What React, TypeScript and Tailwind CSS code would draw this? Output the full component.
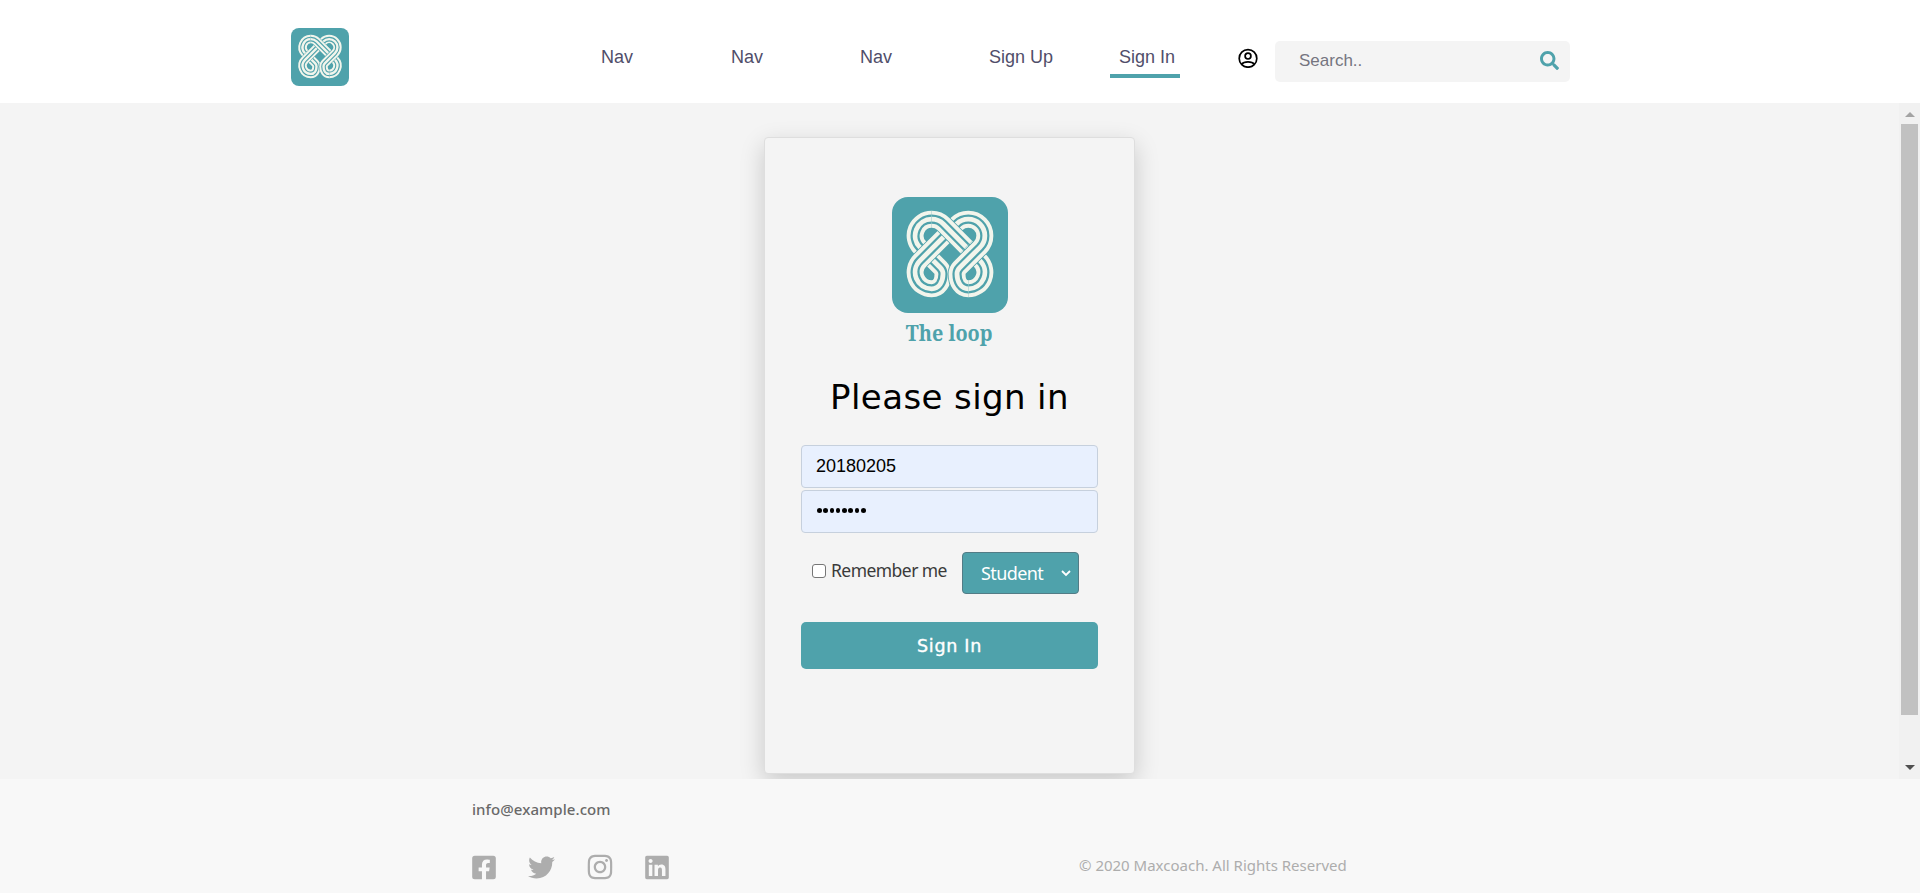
import { FaSearch, FaFacebookSquare, FaTwitter, FaInstagram, FaLinkedin } from "react-icons/fa";

function Strand({ d }: { d: string }) {
  return (
    <g fill="none">
      <path d={d} stroke="#4fa2ab" strokeWidth="18.6" />
      <path d={d} stroke="#f2f5ec" strokeWidth="17" />
      <path d={d} stroke="#4fa2ab" strokeWidth="9.2" />
      <path d={d} stroke="#f2f5ec" strokeWidth="4.8" />
    </g>
  );
}

function LoopMark({ className }: { className: string }) {
  return (
    <svg viewBox="-58 -57 116 116" className={className}>
      <rect x="-58" y="-57" width="116" height="116" rx="16" fill="#4fa2ab" />
      <Strand d="M-18 -34.8H-18.3A16.5 16.5 0 0 0 -30 -6.6L-9.6 13.7A9 9 0 0 1 -7 20C-7 28 -11 34.8 -18.3 34.8H-18.6" />
      <Strand d="M6.6 -16.6L30 6.6A16.5 16.5 0 0 1 18.3 34.8H18" />
      <Strand d="M-18 34.8H-18.3A16.5 16.5 0 0 1 -30 6.6L6.6 -30A16.5 16.5 0 0 1 30 -6.6L9.6 13.7A9 9 0 0 0 7 20C7 28 11 34.8 18.3 34.8H18.6" />
      <Strand d="M-18.6 -34.8H-18.3A16.5 16.5 0 0 1 -6.6 -30L16 -7.3" />
    </svg>
  );
}

function UserCircle({ className }: { className: string }) {
  return (
    <svg viewBox="0 0 20 20" className={className} fill="none" stroke="black" strokeWidth="1.7">
      <circle cx="10" cy="10.4" r="8.8" />
      <circle cx="10" cy="8.1" r="2.9" />
      <path d="M3.6 16.2C5.2 14.2 6.5 13.9 10 13.9C13.5 13.9 14.8 14.2 16.4 16.2" />
    </svg>
  );
}

export default function App() {
  return (
    <div className="flex h-[893px] w-full flex-col overflow-hidden bg-[#f4f4f4] font-['Liberation_Sans',sans-serif]">
      <header className="flex h-[103px] shrink-0 bg-white pl-[291px]">
        <LoopMark className="mt-7 h-[58px] w-[58px]" />
        <nav className="ml-[252px] flex pt-[43px] text-[18px] leading-7 text-[#504e6a]">
          <a className="w-[130px]">Nav</a>
          <a className="w-[129px]">Nav</a>
          <a className="w-[129px]">Nav</a>
          <a className="w-[121px]">Sign Up</a>
          <a className="h-[35px] w-[70px] border-b-4 border-[#4fa2ab] pl-[9px]">Sign In</a>
        </nav>
        <UserCircle className="mt-12 ml-[58px] h-5 w-5" />
        <div className="mt-[41px] ml-[17px] flex h-[41px] w-[295px] items-center justify-between rounded-[5px] bg-[#f4f4f4] pr-[11px] pl-6">
          <span className="pb-px text-[17px] text-[#757580]">Search..</span>
          <FaSearch className="mb-[3px] h-[19px] w-[19px] text-[#4fa2ab]" />
        </div>
      </header>
      <main className="flex h-[676px] shrink-0 overflow-hidden">
        <div className="flex flex-1 justify-center overflow-hidden pt-[34px]">
          <section className="flex h-[637px] w-[371px] flex-col items-center rounded border border-[#dedede] bg-[#f4f4f4] pt-[59px] shadow-[0_8px_24px_rgba(0,0,0,0.18)]">
            <LoopMark className="h-[116px] w-[116px] shrink-0" />
            <span className="mt-[3px] h-8 scale-x-[0.9] font-['Noto_Serif','DejaVu_Serif',serif] text-[22px] leading-8 font-bold text-[#4fa2ab]">The loop</span>
            <h1 className="mt-[25px] h-12 font-['DejaVu_Sans',sans-serif] text-[34px] leading-[48px] tracking-[0.4px] whitespace-nowrap text-black">Please sign in</h1>
            <div className="mt-[24px] flex h-[43px] w-[297px] items-center rounded border border-[#c6d0dd] bg-[#e8f0fe] px-3.5 text-[18px] text-black">20180205</div>
            <div className="mt-0.5 flex h-[43px] w-[297px] items-center gap-[1.8px] rounded border border-[#c6d0dd] bg-[#e8f0fe] px-[15px]">
              {Array.from({ length: 8 }, (_, i) => (
                <span key={i} className="mb-[2px] h-[4.5px] w-[4.5px] rounded-full bg-black" />
              ))}
            </div>
            <div className="mt-[19px] flex h-[42px] w-[297px] pl-[11px] font-['Noto_Sans',sans-serif]">
              <span className="mt-3 h-3.5 w-3.5 shrink-0 rounded-[3px] border border-[#767676] bg-white" />
              <span className="ml-[5px] w-[131px] text-[17.5px] leading-[37px] tracking-[-0.55px] whitespace-nowrap text-[#3a3a3a]">Remember me</span>
              <div className="flex w-[117px] items-center justify-between rounded border border-[#527c86] bg-[#4fa2ab] pr-[7px] pl-[18px] text-[18px] tracking-[-0.6px] text-white">
                <span>Student</span>
                <svg viewBox="0 0 10 7" className="h-[7px] w-2.5"><path d="M1 1L5 5L9 1" fill="none" stroke="white" strokeWidth="1.8" /></svg>
              </div>
            </div>
            <div className="mt-7 flex h-[47px] w-[297px] items-center justify-center rounded-[5px] bg-[#4fa2ab] pt-px font-['DejaVu_Sans',sans-serif] text-[17.5px] tracking-[0.7px] text-white [-webkit-text-stroke:0.4px_white]">Sign In</div>
          </section>
        </div>
        <div className="flex w-[21px] flex-col items-center bg-[#f1f1f1] pt-[9px] pb-[9px]">
          <svg viewBox="0 0 10 5" className="h-[5px] w-2.5"><path d="M0 5L5 0L10 5Z" fill="#a3a3a3" /></svg>
          <div className="mt-[7px] h-[591px] w-[17px] bg-[#c1c1c1]" />
          <svg viewBox="0 0 10 5" className="mt-auto h-[5px] w-2.5"><path d="M0 0L5 5L10 0Z" fill="#505050" /></svg>
        </div>
      </main>
      <footer className="flex h-[114px] shrink-0 bg-[#f8f8f8] pl-[472px] font-['Noto_Sans',sans-serif]">
        <div className="w-[607px] pt-[18px]">
          <p className="h-6 text-[15px] leading-6 font-medium tracking-[0.07px] text-[#696969]">info@example.com</p>
          <div className="mt-[32px] flex items-center text-[#adadad]">
            <FaFacebookSquare className="h-[27px] w-6" />
            <FaTwitter className="ml-8 h-[27px] w-[27px]" />
            <FaInstagram className="ml-[32px] h-[28px] w-[26px]" />
            <FaLinkedin className="ml-[31px] h-[27px] w-[26px]" />
          </div>
        </div>
        <p className="pt-[74px] text-[15px] leading-6 text-[#adadad]">© 2020 Maxcoach. All Rights Reserved</p>
      </footer>
    </div>
  );
}
